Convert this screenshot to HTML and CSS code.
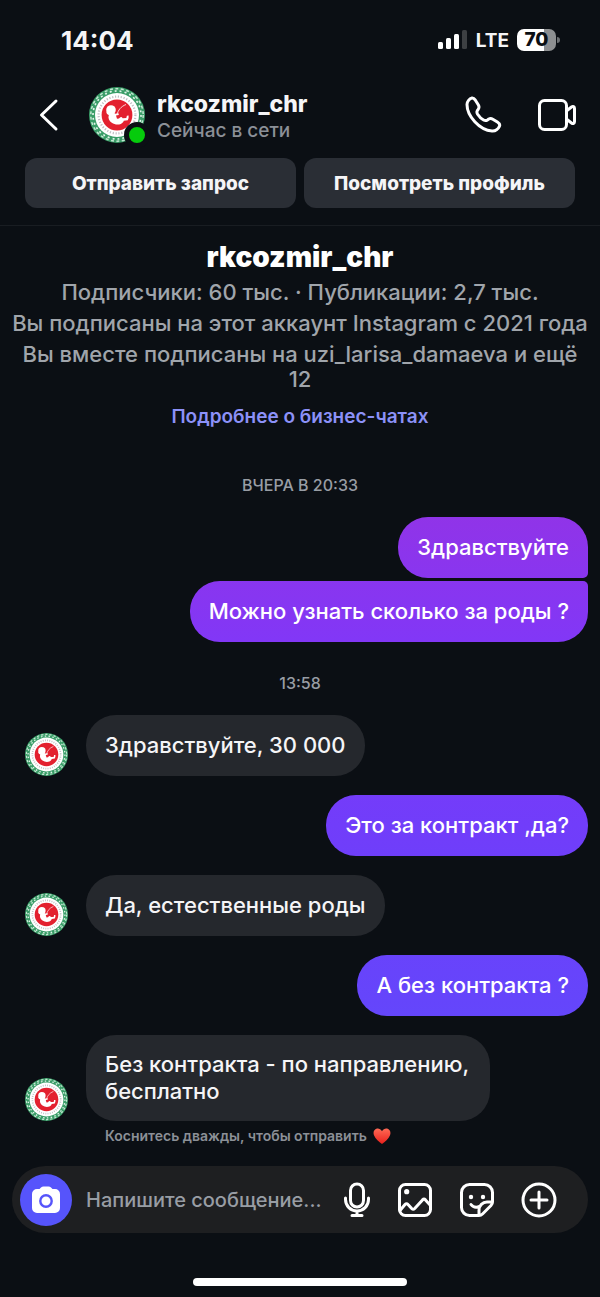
FILE: index.html
```html
<!DOCTYPE html>
<html lang="ru">
<head>
<meta charset="utf-8">
<meta name="viewport" content="width=device-width, initial-scale=1">
<title>rkcozmir_chr</title>
<link rel="stylesheet" href="styles.css">
</head>
<body>
<svg class="sprite" aria-hidden="true">
  <symbol id="emblem" viewBox="0 0 56 56">
    <circle cx="28" cy="28" r="28" fill="#3a9d68"/>
    <circle cx="28" cy="28" r="26.200" fill="none" stroke="#c4e6d2" stroke-width="1.500" stroke-dasharray="3 2.500"/>
    <circle cx="28" cy="28" r="24" fill="none" stroke="#e2f4ea" stroke-width="1.600" stroke-dasharray="2 3"/>
    <circle cx="28" cy="28" r="22" fill="#fff"/>
    <circle cx="28" cy="28" r="18.400" fill="none" stroke="#c0bfc4" stroke-width="2.200" stroke-dasharray="1.200 1.700"/>
    <circle cx="28" cy="28" r="15.400" fill="#e3202f"/>
    <circle cx="22" cy="23" r="4.800" fill="#fff"/>
    <path d="M17.500 24.500c-.4 2 .8 3 2.300 3.500-1 3 .2 6 3 7.800 2.600 1.900 6.300 2.300 9 1.200 1.600-.7 2.600-1.800 3-3.200l4-.6q1.200-2.200.8-4.600l-1.700.2-.6 2.300-3.600.2q-1.700-2.700-3.700.3l-2 .2-1-3.200 2.800-.6-.3-1.700-3.500.4-2-2z" fill="#fff"/>
    <path d="M28 28c1-5 4-8.500 9-10.500" fill="none" stroke="#fff" stroke-width=".8"/>
  </symbol>
</svg>

<div class="screen">
  <div class="status">
    <time class="clock">14:04</time>
    <div class="status-right">
      <svg class="signal" viewBox="0 0 30 20" aria-label="Сигнал">
        <rect x="0" y="12" width="5" height="7" rx="1.500" fill="#fff"/>
        <rect x="8" y="8" width="5" height="11" rx="1.500" fill="#fff"/>
        <rect x="16" y="4" width="5" height="15" rx="1.500" fill="#fff"/>
        <rect x="24" y="0" width="5" height="19" rx="1.500" fill="#3d4043"/>
      </svg>
      <span class="network">LTE</span>
      <span class="battery"><span class="battery-level">70</span></span>
    </div>
  </div>

  <header class="header">
    <button class="icon-button back" aria-label="Назад">
      <svg width="20" height="34" viewBox="0 0 20 34"><path d="M17 3 2.500 17 17 31" class="line"/></svg>
    </button>
    <div class="avatar-wrap">
      <svg class="avatar-large" role="img" aria-label="rkcozmir_chr"><use href="#emblem"/></svg>
      <span class="online"></span>
    </div>
    <div class="person">
      <span class="name">rkcozmir_chr</span>
      <span class="presence">Сейчас в сети</span>
    </div>
    <div class="calls">
      <button class="icon-button" aria-label="Аудиозвонок">
        <svg width="38" height="38" viewBox="0 0 38 38"><path class="line" d="M3 8.500 C3 5.500 5.500 2.500 8 2 C9.600 1.800 10.600 3 11.400 4.200 L14.400 9 C15.400 10.800 15.200 12 14.200 13.400 L13.300 14.700 C12.600 15.800 12.800 16.800 13.600 18.200 C15 20.400 17 22.600 19.600 24 C21 24.800 22.200 24.800 23.400 24 L24.800 23 C26.200 22.200 27.400 22.400 28.800 23.200 L33.400 26 C35.400 27.300 36.300 28.500 35.400 30.400 C33.900 33.500 31 35.200 28 35 C15.500 34 3 20 3 8.500 Z"/></svg>
      </button>
      <button class="icon-button" aria-label="Видеозвонок">
        <svg width="40" height="34" viewBox="0 0 40 34"><rect x="2.500" y="2.500" width="27" height="29" rx="5" class="line"/><path class="line" d="m30 12.500 4.500-3.500c1.600-1.200 3-.4 3 1.500v13c0 1.900-1.400 2.700-3 1.500L30 21.500"/></svg>
      </button>
    </div>
  </header>
  <div class="actions">
    <button class="action">Отправить запрос</button>
    <button class="action">Посмотреть профиль</button>
  </div>

  <main class="chat">
    <section class="profile">
      <h1>rkcozmir_chr</h1>
      <p>Подписчики: 60 тыс. · Публикации: 2,7 тыс.</p>
      <p>Вы подписаны на этот аккаунт Instagram с 2021 года</p>
      <p>Вы вместе подписаны на uzi_larisa_damaeva и ещё 12</p>
      <a href="#business">Подробнее о бизнес-чатах</a>
    </section>

    <time class="stamp first-stamp">ВЧЕРА В 20:33</time>
    <div class="group">
      <p class="bubble sent joined-below">Здравствуйте</p>
      <p class="bubble sent joined-above">Можно узнать сколько за роды ?</p>
    </div>
    <time class="stamp">13:58</time>

    <div class="thread">
      <div class="received-row">
        <svg class="avatar" aria-hidden="true"><use href="#emblem"/></svg>
        <p class="bubble received">Здравствуйте, 30 000</p>
      </div>
      <p class="bubble sent">Это за контракт ,да?</p>
      <div class="received-row">
        <svg class="avatar" aria-hidden="true"><use href="#emblem"/></svg>
        <p class="bubble received">Да, естественные роды</p>
      </div>
      <p class="bubble sent">А без контракта ?</p>
      <div class="received-row">
        <svg class="avatar" aria-hidden="true"><use href="#emblem"/></svg>
        <p class="bubble received">Без контракта - по направлению, бесплатно</p>
      </div>
    </div>
    <p class="hint">Коснитесь дважды, чтобы отправить
      <svg class="heart" viewBox="0 0 18 16" aria-label="сердце"><defs><linearGradient id="red" x1="0" y1="0" x2="0" y2="1"><stop offset="0" stop-color="#ff6a55"/><stop offset="1" stop-color="#e8201c"/></linearGradient></defs><path fill="url(#red)" d="M9 3.200C10.500.6 13 0 14.700.8c2.600 1 3.400 4 2.200 6.600C15.500 10.800 12 13.600 9 16 6 13.600 2.500 10.800 1.100 7.400-.1 4.800.7 1.800 3.300.8 5 0 7.500.6 9 3.200z"/></svg>
    </p>
  </main>

  <form class="composer">
    <button type="button" class="camera" aria-label="Камера">
      <svg width="28" height="28" viewBox="0 0 28 28"><path fill="#fff" d="M9 1.500Q10 .5 11.500.5h5q1.500 0 2.500 1L20.500 3h2.500a5 5 0 0 1 5 5v14a5 5 0 0 1-5 5H5a5 5 0 0 1-5-5V8a5 5 0 0 1 5-5h2.500z"/><circle cx="14" cy="15" r="5.700" fill="#fff" stroke="#5654fb" stroke-width="2.400"/></svg>
    </button>
    <input class="message" type="text" aria-label="Сообщение" placeholder="Напишите сообщение...">
    <div class="tools">
      <button type="button" class="icon-button" aria-label="Голосовое сообщение">
        <svg width="28" height="36" viewBox="0 0 28 36"><rect class="line" x="7.500" y="2" width="13" height="23" rx="6.500"/><path class="line" d="M2.500 16v1.500a11.500 11.500 0 0 0 23 0V16M14 29.500V33.500M9 33.500h10"/></svg>
      </button>
      <button type="button" class="icon-button" aria-label="Фото">
        <svg width="36" height="36" viewBox="0 0 36 36"><rect class="line" x="2.500" y="2.500" width="31" height="31" rx="6"/><circle cx="9.700" cy="9.700" r="2.600" fill="#fff"/><path class="line" d="m3 28.500 5-6q1.500-1.700 3 0l3.700 4q1.500 1.500 3 0l7.800-8.600q1.500-1.500 3 0l5 5.500"/></svg>
      </button>
      <button type="button" class="icon-button" aria-label="Стикер">
        <svg width="36" height="36" viewBox="0 0 36 36"><path class="line" d="M20 33.500H10.500a8 8 0 0 1-8-8v-15a8 8 0 0 1 8-8h15a8 8 0 0 1 8 8V20q0 2-1.500 3.500l-8.500 8.500Q22 33.500 20 33.500zM20 33.500V28a8 8 0 0 1 8-8h5.500M12 22.500c2 2.800 5 3.500 8.500 2"/><circle cx="12" cy="15" r="2.200" fill="#fff"/><circle cx="24" cy="15" r="2.200" fill="#fff"/></svg>
      </button>
      <button type="button" class="icon-button" aria-label="Добавить">
        <svg width="36" height="36" viewBox="0 0 36 36"><circle class="line" cx="18" cy="18" r="16"/><path class="line" d="M18 10v16M10 18h16"/></svg>
      </button>
    </div>
  </form>
  <div class="home-indicator"></div>
</div>
</body>
</html>
```
FILE: styles.css
```css
* { box-sizing: border-box; }

body {
  margin: 0;
  background: #0b0f14;
  color: #f5f5f7;
  font-family: Inter, "Noto Sans", sans-serif;
}

h1, p { margin: 0; }

button {
  border: 0;
  padding: 0;
  font: inherit;
  color: inherit;
  cursor: pointer;
}

.sprite { position: absolute; width: 0; height: 0; }

.screen {
  min-height: 100vh;
  display: flex;
  flex-direction: column;
}

.line {
  fill: none;
  stroke: #fff;
  stroke-width: 3;
  stroke-linecap: round;
  stroke-linejoin: round;
}

.status {
  height: 80px;
  padding: 0 44px 0 61px;
  display: flex;
  align-items: center;
  justify-content: space-between;
}

.clock { font-size: 26px; font-weight: 700; }
.status-right { display: flex; align-items: center; gap: 8px; }
.signal { width: 30px; height: 20px; }
.network { font-size: 19px; font-weight: 700; }

.battery {
  position: relative;
  width: 39px;
  height: 22px;
  border-radius: 7px;
  background: linear-gradient(to right, #fff 70%, #8d8f91 70%);
}

.battery::after {
  content: "";
  position: absolute;
  left: 40px;
  top: 8px;
  width: 3px;
  height: 6px;
  border-radius: 0 3px 3px 0;
  background: #6d7073;
}

.battery-level {
  display: block;
  text-align: center;
  font-size: 19px;
  font-weight: 800;
  line-height: 22px;
  color: #0b0f14;
}

.header {
  height: 70px;
  padding: 0 23px 0 39px;
  display: flex;
  align-items: center;
}

.icon-button { display: flex; background: none; }

.avatar-wrap { position: relative; width: 56px; height: 56px; margin-left: 30px; }
.avatar-large { display: block; width: 56px; height: 56px; }

.online {
  position: absolute;
  right: -5px;
  bottom: -5px;
  width: 26px;
  height: 26px;
  border: 5px solid #0b0f14;
  border-radius: 50%;
  background: #06cb0c;
}

.person { flex: 1; padding-top: 4px; margin-left: 12px; display: flex; flex-direction: column; }
.name { font-size: 23px; font-weight: 800; line-height: 27px; }
.presence { font-size: 19px; font-weight: 500; line-height: 25px; color: #8b9097; }
.calls { display: flex; align-items: center; gap: 35px; }

.actions {
  padding: 8px 25px 17px;
  display: grid;
  grid-template-columns: 1fr 1fr;
  gap: 8px;
  border-bottom: 1px solid #191d22;
}

.action {
  height: 50px;
  border-radius: 12px;
  background: #2a2e35;
  font-size: 19px;
  font-weight: 800;
}

.chat { flex: 1; display: flex; flex-direction: column; padding-right: 12px; }

.profile {
  padding: 14px 0 0 12px;
  display: flex;
  flex-direction: column;
  align-items: center;
  text-align: center;
  color: #a0a5ab;
}

.profile h1 { font-size: 28px; line-height: 34px; font-weight: 900; color: #fff; margin-bottom: 6px; }
.profile p { font-size: 22px; line-height: 25px; font-weight: 500; margin-bottom: 6px; }
.profile a { margin-top: 7px; font-size: 19px; line-height: 24px; font-weight: 600; color: #8c91f8; text-decoration: none; }

.stamp {
  padding: 31px 0 22px 12px;
  text-align: center;
  font-size: 16px;
  line-height: 20px;
  font-weight: 500;
  color: #989da4;
}

.first-stamp { padding-top: 46px; }

.group { display: flex; flex-direction: column; gap: 3px; }
.thread { display: flex; flex-direction: column; gap: 19px; }

.bubble {
  min-height: 61px;
  max-width: 404px;
  padding: 16px 19px;
  display: flex;
  align-items: center;
  border-radius: 30px;
  font-size: 22px;
  line-height: 27px;
  font-weight: 500;
}

.sent {
  align-self: flex-end;
  color: #fff;
  background: linear-gradient(#9034e8 517px, #8237f6 640px, #713dfa 825px, #6446fb 1016px) fixed;
}

.joined-below { border-bottom-right-radius: 5px; }
.joined-above { border-top-right-radius: 5px; }

.received-row { display: flex; align-items: flex-end; gap: 18px; padding-left: 25px; }
.received { background: #25282d; }
.avatar { flex: none; width: 43px; height: 43px; }

.hint {
  padding: 6px 0 0 105px;
  display: flex;
  align-items: center;
  gap: 6px;
  font-size: 14px;
  line-height: 18px;
  font-weight: 600;
  color: #8b9097;
}

.heart { width: 18px; height: 16px; }

.composer {
  margin: 20px 12px 0;
  padding: 7px 31px 7px 8px;
  min-height: 67px;
  display: flex;
  align-items: center;
  border-radius: 34px;
  background: #1e1f21;
}

.camera {
  flex: none;
  width: 52px;
  height: 52px;
  display: flex;
  align-items: center;
  justify-content: center;
  border-radius: 50%;
  background: #5654fb;
}

.message {
  flex: 1;
  min-width: 0;
  margin: 0 8px 0 14px;
  padding: 0;
  border: 0;
  outline: 0;
  background: none;
  font: 500 20px/28px Inter, "Noto Sans", sans-serif;
  color: #fff;
}

.message::placeholder { color: #989da4; opacity: 1; }

.tools { display: flex; align-items: center; gap: 26px; }

.home-indicator {
  align-self: center;
  width: 214px;
  height: 8px;
  margin: 45px 0 11px;
  border-radius: 4px;
  background: #fff;
}
```
